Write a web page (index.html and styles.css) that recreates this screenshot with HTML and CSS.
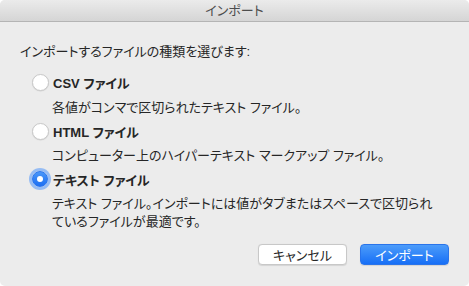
FILE: index.html
```html
<!DOCTYPE html>
<html lang="ja">
<head>
    <meta charset="UTF-8">
    <title>インポート</title>
    <link rel="stylesheet" href="styles.css">
</head>
<body>
    <div class="window">
        <div class="titlebar">インポート</div>

        <div class="content">
            <p class="prompt">インポートするファイルの種類を選びます:</p>

            <div class="option first">
                <label class="choice"><span class="radio"></span><b>CSV ファイル</b></label>
                <p class="desc">各値がコンマで区切られたテキスト ファイル。</p>
            </div>

            <div class="option">
                <label class="choice"><span class="radio"></span><b>HTML ファイル</b></label>
                <p class="desc">コンピューター上のハイパーテキスト マークアップ ファイル。</p>
            </div>

            <div class="option">
                <label class="choice"><span class="radio checked"></span><b>テキスト ファイル</b></label>
                <p class="desc">テキスト ファイル。インポートには値がタブまたはスペースで区切られているファイルが最適です。</p>
            </div>

            <div class="buttons">
                <button class="btn">キャンセル</button>
                <button class="btn primary">インポート</button>
            </div>
        </div>
    </div>
</body>
</html>
```

FILE: styles.css
```css
body {
    margin: 0;
    background: #ffffff;
    font-family: "Liberation Sans", "Noto Sans CJK JP", sans-serif;
    font-size: 13px;
    color: #262626;
    font-feature-settings: "palt";
}

/* dialog window */
.window {
    width: 469px;
    height: 286px;
    background: #ececec;
    border-radius: 5px;
    overflow: hidden;
}

.titlebar {
    height: 21px;
    line-height: 21px;
    text-align: center;
    color: #4d4d4d;
    background: linear-gradient(#ebebeb, #d5d5d5);
    border-bottom: 1px solid #b4b4b4;
}

.content {
    padding: 0 20px;
}

.prompt {
    margin: 21px 0 0;
    line-height: 18px;
}

.option {
    margin-top: 4px;
    padding-left: 12px;
}

.option.first {
    margin-top: 11px;
}

.choice {
    display: flex;
    align-items: center;
    gap: 4px;
    height: 20px;
}

.choice b {
    font-weight: bold;
}

/* radio buttons */
.radio {
    width: 15px;
    height: 15px;
    border-radius: 50%;
    background: #ffffff;
    border: 1px solid #c9c9c9;
    box-shadow: 0 0.5px 1px rgba(0, 0, 0, 0.12);
    position: relative;
}

.radio.checked {
    width: 14px;
    height: 14px;
    margin-right: 1px;
    background: linear-gradient(#4a97f8, #1d6ff2);
    border-color: #2a76f0;
    box-shadow: 0 0 0 3px rgba(80, 150, 250, 0.55);
}

.radio.checked::after {
    content: "";
    position: absolute;
    left: 4px;
    top: 4px;
    width: 6px;
    height: 6px;
    border-radius: 50%;
    background: #ffffff;
}

.desc {
    margin: 6px 0 0;
    padding: 0 8px 0 20px;
    line-height: 18px;
}

.option.first .desc {
    margin-top: 7px;
}

/* bottom buttons */
.buttons {
    display: flex;
    justify-content: flex-end;
    gap: 13px;
    margin-top: 13px;
}

.btn {
    width: 89px;
    height: 21px;
    padding: 0;
    font-family: inherit;
    font-size: 13px;
    font-feature-settings: "palt";
    color: #262626;
    background: #ffffff;
    border: 1px solid #c8c8c8;
    border-radius: 4px;
    box-shadow: 0 0.5px 1px rgba(0, 0, 0, 0.1);
}

.btn.primary {
    color: #ffffff;
    background: linear-gradient(#4c9cfa, #176ff6);
    border-color: #2a74ea;
}
```
